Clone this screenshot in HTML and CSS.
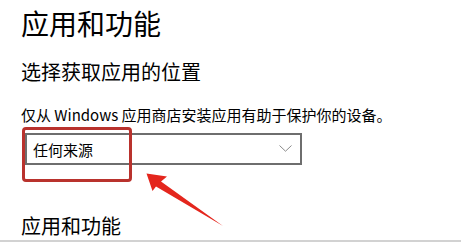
FILE: index.html
```html
<!DOCTYPE html>
<html lang="zh-CN">
<head>
<meta charset="utf-8">
<title>应用和功能</title>
<link rel="stylesheet" href="styles.css">
</head>
<body>
<div class="page">
  <div class="content">
    <h1 class="title">应用和功能</h1>
    <h2 class="subtitle">选择获取应用的位置</h2>
    <p class="desc">仅从 Windows 应用商店安装应用有助于保护你的设备。</p>
    <div class="select">
      <span class="select-text">任何来源</span>
      <svg class="chevron" width="13" height="7" viewBox="0 0 13 7"><polyline points="0.5,0.5 6.5,6.2 12.5,0.5" fill="none" stroke="#8a8a8a" stroke-width="1"/></svg>
    </div>
    <h2 class="section">应用和功能</h2>
  </div>
  <div class="divider"></div>
  <div class="highlight"></div>
  <svg class="arrow" width="461" height="243" viewBox="0 0 461 243">
    <polygon points="146.5,173.5 167,176.5 161,181.5 223,226 156,186.5 152.5,191" fill="#e4261d"/>
  </svg>
</div>
</body>
</html>
```

FILE: styles.css
```css
html, body {
  margin: 0;
  padding: 0;
  background: #ffffff;
}

body {
  font-family: "Noto Sans CJK SC", "Noto Sans", sans-serif;
  color: #000000;
  width: 461px;
  height: 243px;
  overflow: hidden;
}

.page {
  position: relative;
  width: 461px;
  height: 243px;
}

.content {
  padding-left: 21px;
  display: flex;
  flex-direction: column;
  align-items: flex-start;
}

.title {
  margin: 0;
  font-size: 28px;
  font-weight: 400;
  line-height: 46px;
}

.subtitle {
  margin: 12px 0 0 0;
  font-size: 20px;
  font-weight: 400;
  line-height: 28px;
}

.desc {
  margin: 19px 0 0 0;
  font-size: 15px;
  line-height: 20px;
}

.select {
  margin: 8px 0 0 4px;
  box-sizing: border-box;
  width: 277px;
  height: 32px;
  border: 2px solid #6e6e6e;
  display: flex;
  align-items: center;
  justify-content: space-between;
  padding: 0 8px 0 6px;
}

.select-text {
  font-size: 15px;
  line-height: 20px;
  margin-top: 1px;
}

.chevron {
  display: block;
  margin-top: -1px;
}

.section {
  margin: 47px 0 0 0;
  font-size: 20px;
  font-weight: 400;
  line-height: 28px;
}

.divider {
  height: 2px;
  background: #d2d2d2;
}

.highlight {
  position: absolute;
  left: 22px;
  top: 127px;
  width: 110px;
  height: 55px;
  box-sizing: border-box;
  border: 3.5px solid #b9322d;
  border-radius: 4px;
}

.arrow {
  position: absolute;
  left: 0;
  top: 0;
}
```
